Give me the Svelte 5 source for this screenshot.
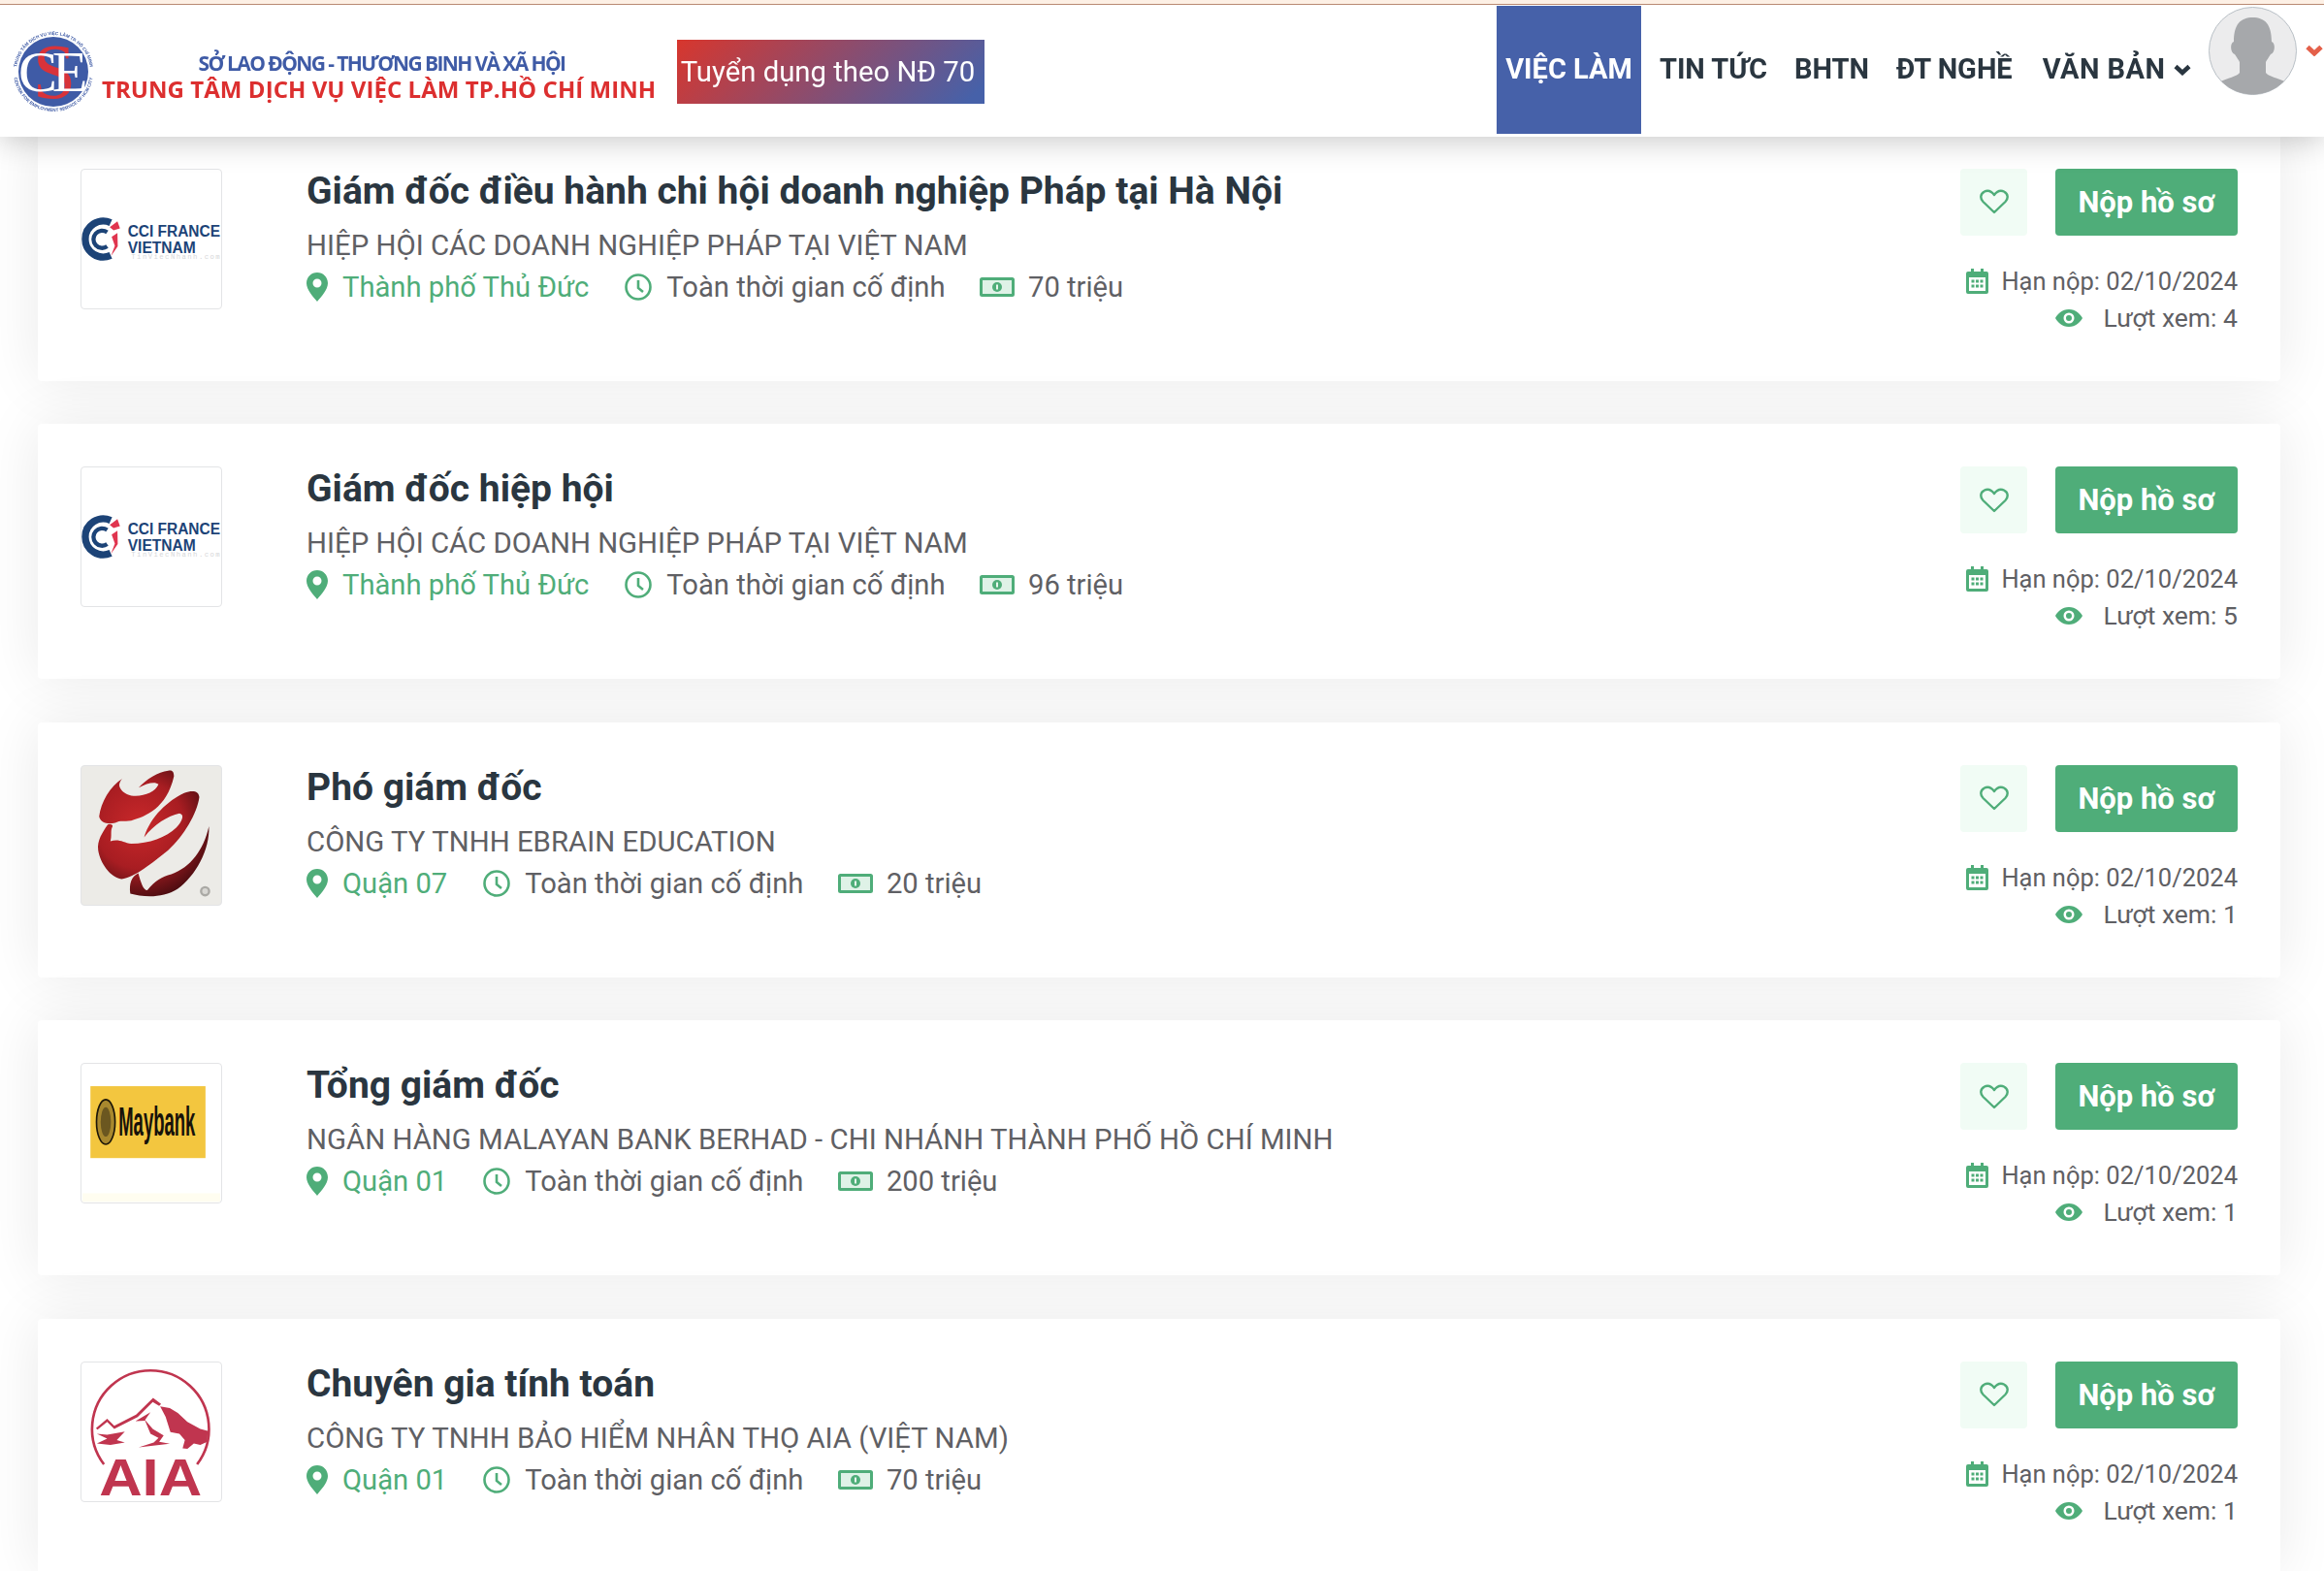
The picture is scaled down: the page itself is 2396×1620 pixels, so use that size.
<script>
	const jobs = [
		{ title: 'Giám đốc điều hành chi hội doanh nghiệp Pháp tại Hà Nội', company: 'HIỆP HỘI CÁC DOANH NGHIỆP PHÁP TẠI VIỆT NAM', place: 'Thành phố Thủ Đức', salary: '70 triệu', views: 4, logo: 'cci' },
		{ title: 'Giám đốc hiệp hội', company: 'HIỆP HỘI CÁC DOANH NGHIỆP PHÁP TẠI VIỆT NAM', place: 'Thành phố Thủ Đức', salary: '96 triệu', views: 5, logo: 'cci' },
		{ title: 'Phó giám đốc', company: 'CÔNG TY TNHH EBRAIN EDUCATION', place: 'Quận 07', salary: '20 triệu', views: 1, logo: 'ebrain' },
		{ title: 'Tổng giám đốc', company: 'NGÂN HÀNG MALAYAN BANK BERHAD - CHI NHÁNH THÀNH PHỐ HỒ CHÍ MINH', place: 'Quận 01', salary: '200 triệu', views: 1, logo: 'maybank' },
		{ title: 'Chuyên gia tính toán', company: 'CÔNG TY TNHH BẢO HIỂM NHÂN THỌ AIA (VIỆT NAM)', place: 'Quận 01', salary: '70 triệu', views: 1, logo: 'aia' }
	];
	const nav = ['TIN TỨC', 'BHTN', 'ĐT NGHỀ'];
</script>

<header class="header">
	<div class="topline"></div>
	<div class="bar">
		<svg class="cse" viewBox="0 0 88 90">
			<defs>
				<path id="ringTop" d="M5 44 A38 38 0 0 1 81 44" />
				<path id="ringBottom" d="M2 44 A41 41 0 0 0 84 44" />
			</defs>
			<circle cx="43" cy="44" r="36" fill="#3f5ba6" />
			<text class="ring" fill="#3f5ba6"><textPath href="#ringTop" startOffset="50%" text-anchor="middle">TRUNG TÂM DỊCH VỤ VIỆC LÀM TP. HỒ CHÍ MINH</textPath></text>
			<text class="ring" fill="#3f5ba6"><textPath href="#ringBottom" startOffset="50%" text-anchor="middle">CENTER FOR EMPLOYMENT SERVICE OF HCM CITY</textPath></text>
			<text class="cse-s" x="44" y="71" text-anchor="middle">S</text>
			<text class="cse-l" x="27" y="64" text-anchor="middle">C</text>
			<text class="cse-l" x="60" y="64" text-anchor="middle">E</text>
		</svg>
		<div class="brand">
			<div class="brand-top">SỞ LAO ĐỘNG - THƯƠNG BINH VÀ XÃ HỘI</div>
			<div class="brand-main">TRUNG TÂM DỊCH VỤ VIỆC LÀM TP.HỒ CHÍ MINH</div>
		</div>
		<a class="badge" href="#top">Tuyển dụng theo NĐ 70</a>
		<nav class="nav">
			<a class="nav-item active" href="#top">VIỆC LÀM</a>
			{#each nav as item}
				<a class="nav-item" href="#top">{item}</a>
			{/each}
			<a class="nav-item last" href="#top">VĂN BẢN
				<svg class="chev" viewBox="0 0 18 12"><path d="M2 2.5 L9 9 L16 2.5" fill="none" stroke="#2a3640" stroke-width="4.5" /></svg>
			</a>
		</nav>
		<svg class="avatar" viewBox="0 0 91 91">
			<defs><clipPath id="avatarClip"><circle cx="45.5" cy="45.5" r="45" /></clipPath></defs>
			<circle cx="45.5" cy="45.5" r="45" fill="#ececed" stroke="#b9c0c6" stroke-width="1" />
			<g clip-path="url(#avatarClip)" fill="#a6a8ab">
				<path d="M26 36 C26 18 33 11 45.5 11 C58 11 65 18 65 36 C69 37 69 47 64 49 C62 52 60 55 59 57 L59 68 C61 72 72 73 80 78 L80 95 L11 95 L11 78 C19 73 30 72 32 68 L32 57 C31 55 29 52 27 49 C22 47 22 37 26 36 Z" />
			</g>
		</svg>
		<svg class="chev-red" viewBox="0 0 18 12"><path d="M2 2.5 L9 9 L16 2.5" fill="none" stroke="#e4604a" stroke-width="5" /></svg>
	</div>
</header>

<main class="list">
	{#each jobs as job}
		<article class="card">
			<div class="logo" class:ebrain={job.logo === 'ebrain'} class:maybank={job.logo === 'maybank'}>
				{#if job.logo === 'cci'}
					<svg viewBox="70 43 435 432">
						<path d="M161 208 A56 56 0 1 0 161 310" fill="none" stroke="#1c4377" stroke-width="22" />
						<path d="M150 238 A27 27 0 1 0 150 282" fill="none" stroke="#1c4377" stroke-width="13" />
						<path d="M158 222 L182 204 L190 226 L170 232 Z M164 252 L182 240 L183 282 L162 312 L174 280 Z" fill="#e0354f" />
						<text class="cci" x="214" y="250" textLength="288" lengthAdjust="spacingAndGlyphs">CCI FRANCE</text>
						<text class="cci" x="214" y="302" textLength="212" lengthAdjust="spacingAndGlyphs">VIETNAM</text>
						<text class="cci-mark" x="225" y="320" textLength="276">TinViecNhanh.com</text>
					</svg>
				{:else if job.logo === 'ebrain'}
					<svg viewBox="70 58 435 432">
						<defs>
							<radialGradient id="swirl" gradientUnits="userSpaceOnUse" cx="250" cy="240" r="250">
								<stop offset="0" stop-color="#c9282a" />
								<stop offset="0.55" stop-color="#a81d22" />
								<stop offset="1" stop-color="#3d0a0e" />
							</radialGradient>
						</defs>
						<g fill="url(#swirl)">
							<path d="M197 97 C160 120 130 170 125 215 C130 235 150 240 175 235 C190 225 205 232 225 228 C270 215 335 190 358 90 C358 72 350 70 340 72 C310 75 270 100 248 125 C275 110 300 105 310 115 C300 140 260 155 225 150 C205 145 195 135 190 125 C185 115 190 105 197 97 Z" />
							<path d="M152 240 C135 265 118 290 122 320 C128 360 160 405 195 410 C235 405 290 360 340 320 C390 275 430 205 437 155 C436 135 415 132 390 142 C340 165 285 215 265 280 C295 240 340 212 375 205 C392 208 385 228 365 250 C335 280 280 300 225 300 C200 295 185 283 160 292 C165 275 160 262 165 250 C170 243 165 238 152 240 Z" />
							<path d="M467 245 C470 320 425 400 370 440 C320 472 260 465 222 455 C218 425 225 402 247 392 C255 420 262 445 275 445 C300 415 320 402 350 395 C410 372 450 320 467 245 Z" />
						</g>
						<circle cx="455" cy="448" r="16" fill="#aaa9a5" />
						<circle cx="455" cy="448" r="9" fill="#d8d7d3" />
					</svg>
				{:else if job.logo === 'maybank'}
					<svg viewBox="70 50 435 434">
						<rect x="97" y="120" width="360" height="225" fill="#f3c63f" />
						<rect x="72" y="455" width="431" height="27" fill="#fffdf0" />
						<ellipse cx="145" cy="232" rx="29" ry="70" fill="#a8882e" stroke="#1c1608" stroke-width="5" />
						<ellipse cx="145" cy="232" rx="16" ry="46" fill="#6b5720" />
						<text class="mb" x="185" y="275" textLength="240" lengthAdjust="spacingAndGlyphs">Maybank</text>
					</svg>
				{:else}
					<svg viewBox="70 43 435 432">
						<g fill="#c0354f">
							<path d="M140 360 A182 182 0 1 1 430 360" fill="none" stroke="#c0354f" stroke-width="8" />
							<path d="M115 248 L150 218 L172 240 L240 205 L293 153 L318 172 L312 178 L292 166 L245 213 L172 250 L150 228 L120 252 Z" />
							<path d="M315 180 L345 185 L370 200 L400 228 L440 250 L463 256 L462 290 L440 300 L420 295 L400 312 L385 310 L392 285 L375 265 L347 260 L332 212 Z" />
							<path d="M118 265 L150 268 L205 258 L180 285 L205 292 L160 300 L118 295 L150 280 Z" />
							<path d="M285 198 L238 226 L268 224 L285 265 L310 278 L295 292 L248 307 L345 296 L312 290 L326 270 L292 250 L268 222 Z" />
							<text class="aia" x="125" y="458" textLength="320" lengthAdjust="spacingAndGlyphs">AIA</text>
						</g>
					</svg>
				{/if}
			</div>

			<div class="info">
				<h2 class="title">{job.title}</h2>
				<div class="company">{job.company}</div>
				<div class="meta">
					<span class="meta-item place">
						<svg class="ico-pin" viewBox="0 0 22 30"><path fill-rule="evenodd" d="M11 0 C4.9 0 0 4.9 0 11 C0 18 7 25 11 30 C15 25 22 18 22 11 C22 4.9 17.1 0 11 0 Z M11 6.5 A4.5 4.5 0 1 1 11 15.5 A4.5 4.5 0 1 1 11 6.5 Z" fill="#4fad79" /></svg>
						{job.place}
					</span>
					<span class="meta-item">
						<svg class="ico-clock" viewBox="0 0 28 28"><circle cx="14" cy="14" r="12.5" fill="none" stroke="#4fad79" stroke-width="2.6" /><path d="M14 7 V15 L19 19" fill="none" stroke="#4fad79" stroke-width="2.6" /></svg>
						Toàn thời gian cố định
					</span>
					<span class="meta-item money">
						<svg class="ico-money" viewBox="0 0 36 22"><rect x="1.5" y="2.5" width="33" height="17" rx="1" fill="#dff2e7" stroke="#4fad79" stroke-width="3" /><circle cx="18" cy="11" r="5" fill="#4fad79" /><rect x="17" y="8.5" width="2" height="5" fill="#e8f6ee" /></svg>
						{job.salary}
					</span>
				</div>
			</div>

			<div class="side">
				<div class="actions">
					<button class="fav" aria-label="Yêu thích">
						<svg viewBox="0 0 30 26"><path d="M15 24 L3.5 13 C0 9.5 1 4.5 4.5 2.8 C8 1 12 2 15 6 C18 2 22 1 25.5 2.8 C29 4.5 30 9.5 26.5 13 Z" fill="none" stroke="#4fad79" stroke-width="2.4" stroke-linejoin="round" /></svg>
					</button>
					<button class="apply">Nộp hồ sơ</button>
				</div>
				<div class="dates">
					<div class="date">
						<svg class="ico-cal" viewBox="0 0 23 26"><path fill-rule="evenodd" d="M5 0 H8 V3 H15 V0 H18 V3 H21 Q23 3 23 5 V24 Q23 26 21 26 H2 Q0 26 0 24 V5 Q0 3 2 3 H5 Z M3 9 V23 H20 V9 Z" fill="#4fad79" /><path d="M5.5 11.5 h3 v3 h-3 z M10 11.5 h3 v3 h-3 z M14.5 11.5 h3 v3 h-3 z M5.5 16.5 h3 v3 h-3 z M10 16.5 h3 v3 h-3 z M14.5 16.5 h3 v3 h-3 z" fill="#4fad79" /></svg>
						Hạn nộp: 02/10/2024
					</div>
					<div class="views">
						<svg class="ico-eye" viewBox="0 0 28 18"><path fill-rule="evenodd" d="M14 0 C21 0 26 5 28 9 C26 13 21 18 14 18 C7 18 2 13 0 9 C2 5 7 0 14 0 Z M14 3.5 A5.5 5.5 0 1 0 14 14.5 A5.5 5.5 0 1 0 14 3.5 Z M14 6 A3 3 0 1 1 14 12 A3 3 0 1 1 14 6 Z" fill="#4fad79" /></svg>
						Lượt xem: {job.views}
					</div>
				</div>
			</div>
		</article>
	{/each}
</main>

<style>
	:global(body) {
		background: #fff;
		color: #5f6064;
		font-family: Roboto, 'Noto Sans', sans-serif;
		height: 1620px;
		overflow: hidden;
	}

	a {
		color: inherit;
		text-decoration: none;
	}

	.header {
		background: #fff;
		box-shadow: 0 4px 30px rgba(0, 0, 0, 0.22);
		height: 141px;
		left: 0;
		position: fixed;
		right: 0;
		top: 0;
		z-index: 5;
	}

	.topline {
		background: #fdf0e5;
		border-bottom: 1px solid #b98a73;
		height: 4px;
	}

	.bar {
		align-items: flex-start;
		display: flex;
		height: 136px;
		padding-right: 1px;
		padding-top: 1px;
	}

	.cse {
		height: 90px;
		margin-left: 12px;
		margin-top: 24px;
		width: 88px;
	}

	.ring {
		font-family: 'Liberation Sans', sans-serif;
		font-size: 4.6px;
		font-weight: 700;
	}

	.cse-s {
		fill: #d8333a;
		font-family: 'Liberation Serif', serif;
		font-size: 80px;
	}

	.cse-l {
		fill: #fff;
		font-family: 'Liberation Serif', serif;
		font-size: 60px;
	}

	.brand {
		font-family: 'Open Sans', sans-serif;
		font-weight: 700;
		margin-left: 5px;
		margin-top: 45px;
		text-align: center;
		white-space: nowrap;
		width: 571px;
	}

	.brand-top {
		color: #3f5ba6;
		font-size: 21px;
		letter-spacing: -1.6px;
		line-height: 28px;
		padding-left: 6px;
	}

	.brand-main {
		color: #dc2f2f;
		font-size: 24px;
		letter-spacing: 0.05px;
		line-height: 26px;
	}

	.badge {
		background: linear-gradient(135deg, #d8362d, #4661a9 95%);
		box-sizing: border-box;
		color: #fff;
		font-size: 29.3px;
		height: 66px;
		line-height: 66px;
		margin-left: 22px;
		margin-top: 35px;
		padding-right: 6px;
		text-align: center;
		white-space: nowrap;
		width: 317px;
	}

	.nav {
		align-items: flex-start;
		color: #2a3640;
		display: flex;
		font-size: 29px;
		font-weight: 700;
		margin-left: auto;
	}

	.nav-item {
		display: block;
		height: 132px;
		line-height: 131px;
		padding: 0 14px;
		white-space: nowrap;
	}

	.nav-item.active {
		background: #4661a9;
		color: #fff;
		margin-right: 5px;
		padding: 0 9px;
	}

	.nav-item.last {
		letter-spacing: 0.45px;
		padding-left: 17px;
		padding-right: 0;
	}

	.chev {
		height: 12px;
		margin-left: 1px;
		vertical-align: 3px;
		width: 18px;
	}

	.avatar {
		height: 91px;
		margin-left: 18px;
		margin-top: 1px;
		width: 91px;
	}

	.chev-red {
		height: 12px;
		margin-left: 9px;
		margin-top: 40px;
		width: 18px;
	}

	.list {
		display: flex;
		flex-direction: column;
		gap: 44.5px;
		padding: 129.7px 45px 0 39px;
	}

	.card {
		background: #fff;
		border-radius: 4px;
		box-shadow: 0 0 60px rgba(0, 0, 0, 0.085);
		box-sizing: border-box;
		display: flex;
		flex: none;
		height: 263px;
		padding: 44px 44px 0;
	}

	.logo {
		background: #fff;
		border: 1px solid #e3e4e6;
		border-radius: 4px;
		box-sizing: border-box;
		flex: none;
		height: 145px;
		overflow: hidden;
		width: 146px;
	}

	.logo.ebrain {
		background: #ecebe7;
	}

	.logo svg {
		display: block;
		height: 100%;
		width: 100%;
	}

	.cci {
		fill: #1c4377;
		font-family: 'Liberation Sans', sans-serif;
		font-size: 50px;
		font-weight: 700;
	}

	.cci-mark {
		fill: #d5d6d8;
		font-family: 'Liberation Mono', monospace;
		font-size: 22px;
	}

	.mb {
		fill: #17120a;
		font-family: 'Liberation Sans', sans-serif;
		font-size: 130px;
		font-weight: 700;
	}

	.aia {
		font-family: 'Liberation Sans', sans-serif;
		font-size: 162px;
		font-weight: 700;
	}

	.info {
		flex: 1;
		margin-left: 87px;
		min-width: 0;
	}

	.title {
		color: #2a3640;
		font-size: 39px;
		font-weight: 700;
		line-height: 46px;
		margin: 0;
	}

	.company {
		font-size: 29.4px;
		line-height: 34px;
		margin-top: 16px;
		white-space: nowrap;
	}

	.meta {
		display: flex;
		font-size: 29.2px;
		gap: 37px;
		line-height: 36px;
		margin-top: 8px;
	}

	.meta-item {
		align-items: center;
		display: flex;
		gap: 15px;
		white-space: nowrap;
	}

	.meta-item.money {
		gap: 14px;
		margin-left: -1.5px;
	}

	.place {
		color: #4fad79;
	}

	.ico-pin {
		height: 30px;
		width: 22px;
	}

	.ico-clock {
		height: 28px;
		width: 28px;
	}

	.ico-money {
		height: 22px;
		width: 36px;
	}

	.side {
		display: flex;
		flex: none;
		flex-direction: column;
		align-items: flex-end;
		width: 286px;
	}

	.actions {
		display: flex;
		gap: 29px;
	}

	.fav {
		align-items: center;
		background: #f1fcf5;
		border: 0;
		border-radius: 4px;
		display: flex;
		height: 69px;
		justify-content: center;
		padding: 0;
		width: 69px;
	}

	.fav svg {
		height: 26px;
		width: 30px;
	}

	.apply {
		background: #4fad79;
		border: 0;
		border-radius: 4px;
		color: #fff;
		font-family: inherit;
		font-size: 31px;
		font-weight: 700;
		height: 69px;
		padding: 0;
		width: 188px;
	}

	.dates {
		line-height: 30px;
		margin-top: 32px;
		text-align: right;
	}

	.date,
	.views {
		align-items: center;
		display: flex;
		justify-content: flex-end;
		white-space: nowrap;
	}

	.date {
		font-size: 25.5px;
		gap: 13px;
	}

	.views {
		font-size: 26.5px;
		gap: 21px;
		margin-top: 8px;
	}

	.ico-cal {
		height: 26px;
		width: 23px;
	}

	.ico-eye {
		height: 18px;
		width: 28px;
	}
</style>
